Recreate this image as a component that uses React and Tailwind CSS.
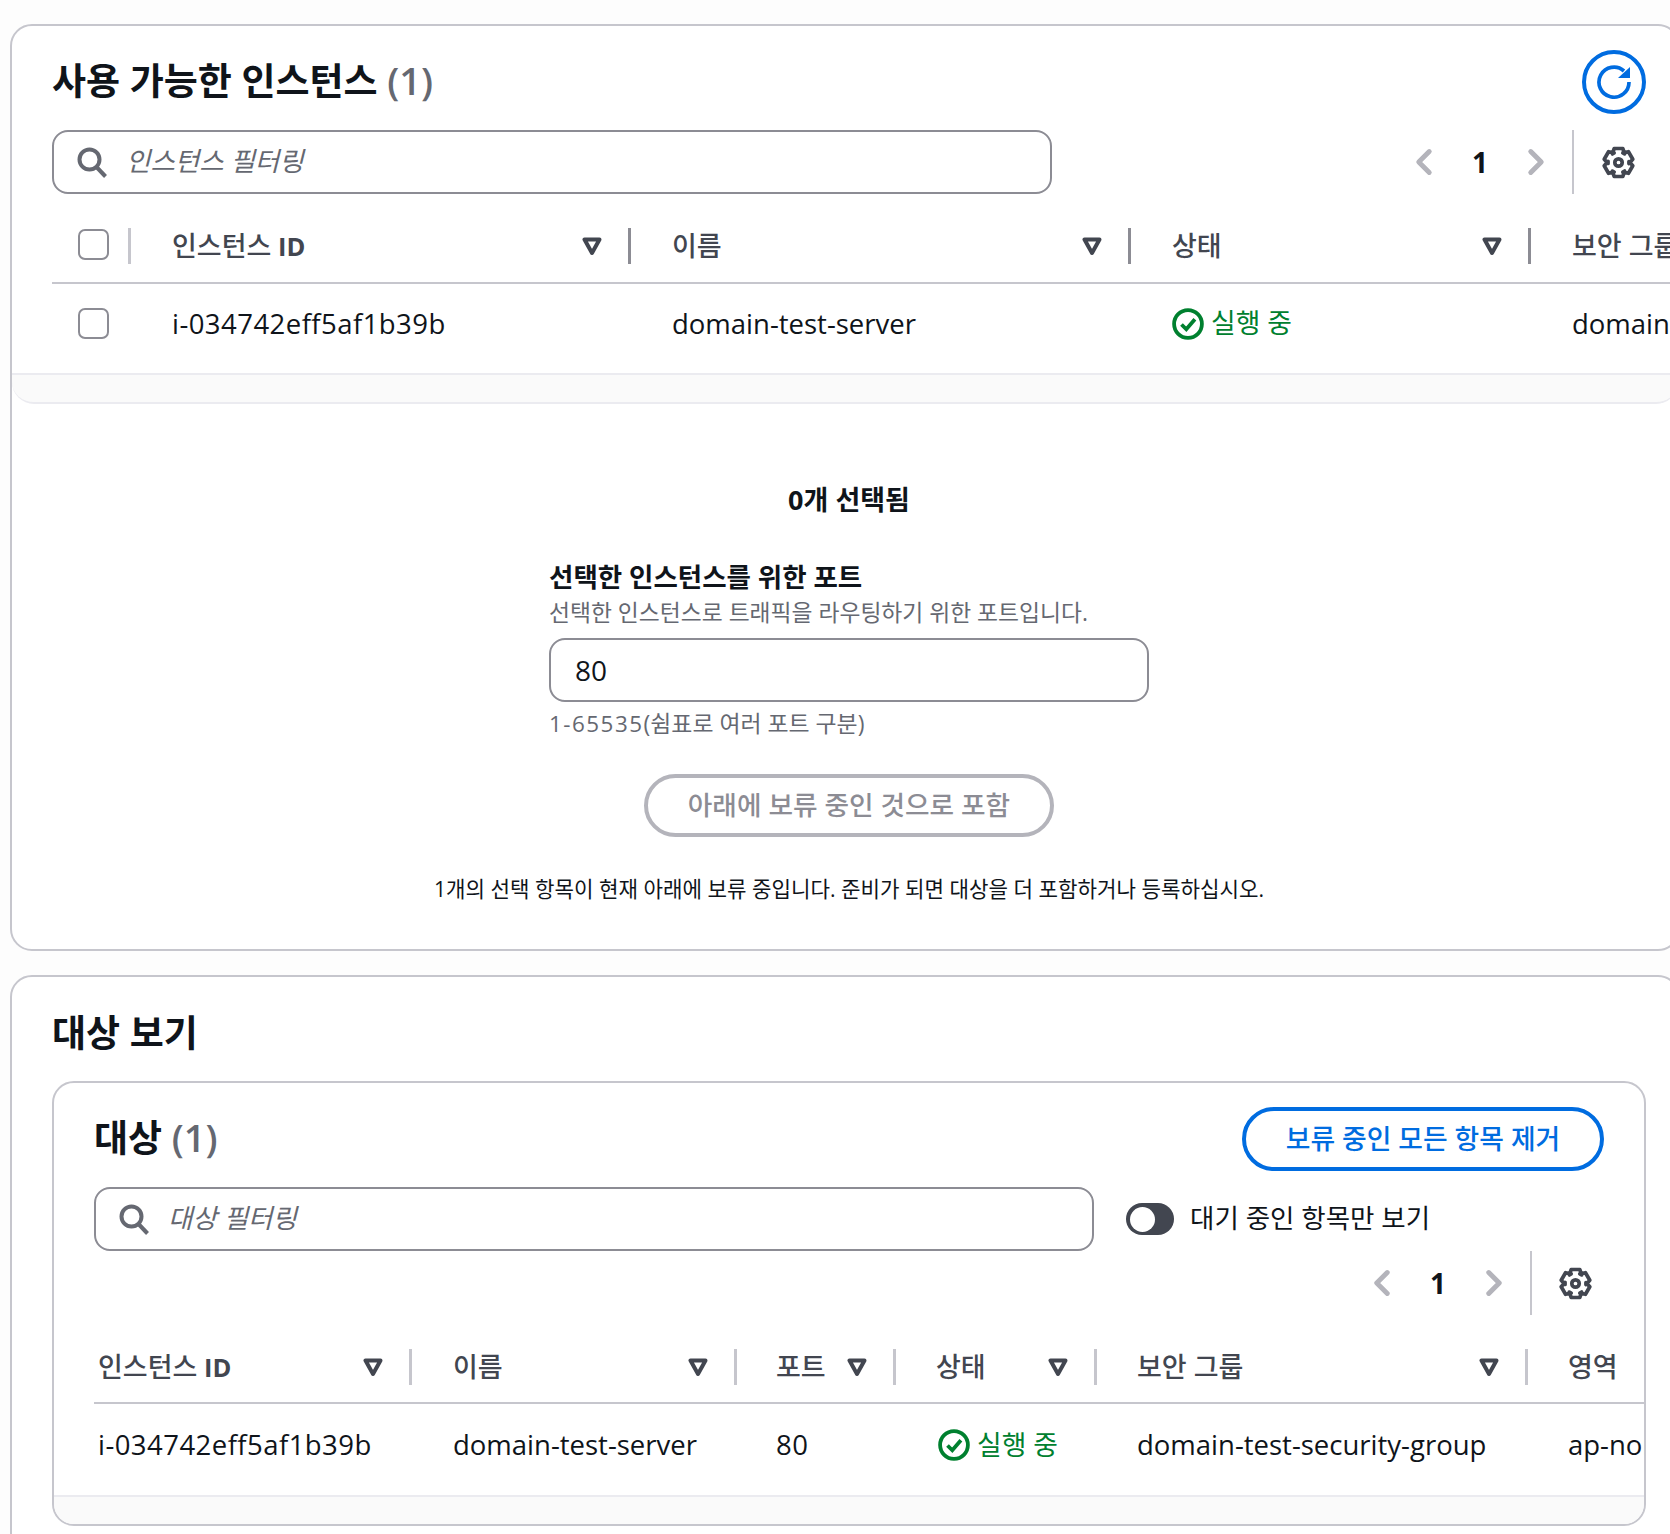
import { ChevronLeft, ChevronRight } from 'lucide-react';

const font = { fontFamily: '"Open Sans", "Noto Sans CJK KR", sans-serif' };

// six-lobed cog outline, top lobe first
const cogPath = (() => {
  const pts = [];
  for (let k = 0; k < 6; k++) {
    const a = ((k * 60 - 90) * Math.PI) / 180;
    [[-0.62, 4.8], [-0.3, 6.7], [0.3, 6.7], [0.62, 4.8]].forEach(([d, r]) => {
      pts.push(`${(8 + r * Math.cos(a + d)).toFixed(2)} ${(8 + r * Math.sin(a + d)).toFixed(2)}`);
    });
  }
  return `M${pts.join('L')}Z`;
})();

function GearIcon() {
  return (
    <svg viewBox="0 0 16 16" className="h-[35px] w-[35px]" fill="none" stroke="#424650" strokeWidth="1.7" strokeLinejoin="round">
      <path d={cogPath} />
      <circle cx="8" cy="8" r="1.7" />
    </svg>
  );
}

function SearchIcon() {
  return (
    <svg viewBox="0 0 32 32" className="h-[32px] w-[32px] shrink-0" fill="none" stroke="#656871" strokeWidth="4">
      <circle cx="13.5" cy="13.5" r="10" />
      <path d="M20.5 21l9 9.5" />
    </svg>
  );
}

function CaretIcon() {
  return (
    <svg viewBox="0 0 20 20" className="h-[20px] w-[20px] shrink-0" fill="none" stroke="#424650" strokeWidth="4" strokeLinejoin="round">
      <path d="M2.5 3.5h15L10 17z" />
    </svg>
  );
}

function StatusOk() {
  return (
    <span className="flex items-center gap-[7px] text-[#00802f]">
      <svg viewBox="0 0 32 32" className="h-[32px] w-[32px] shrink-0" fill="none" stroke="#00802f" strokeWidth="3.8">
        <circle cx="16" cy="16" r="13.9" />
        <path d="M9.5 16.5l4.8 4.8 8.6-10" />
      </svg>
      <span className="text-[26.8px]">실행 중</span>
    </span>
  );
}

function FilterBox({ placeholder, className }) {
  return (
    <div className={`flex h-[64px] items-center rounded-[16px] border-2 border-[#8c8c94] bg-white pl-[22px] ${className}`}>
      <SearchIcon />
      <span className="ml-[18px] text-[26.5px] italic text-[#656871]">{placeholder}</span>
    </div>
  );
}

function Pager({ boxClass }) {
  return (
    <div className="flex items-center">
      <span className={`flex justify-center ${boxClass}`}>
        <ChevronLeft size={42} strokeWidth={2.8} color="#b4b4bb" />
      </span>
      <span className={`flex justify-center text-[28px] font-bold text-[#0f141a] ${boxClass}`}>1</span>
      <span className={`flex justify-center ${boxClass}`}>
        <ChevronRight size={42} strokeWidth={2.8} color="#b4b4bb" />
      </span>
    </div>
  );
}

function HeadCell({ label, latin, width, pad = 'pl-[41px]', divider = 'bg-[#8c8c94]', last }) {
  return (
    <div className={`flex h-[36px] shrink-0 items-center ${width} ${pad}`}>
      <span className="whitespace-nowrap text-[27px] font-medium text-[#424650]">
        {label}
        {latin && <span className="text-[25.5px] font-bold"> {latin}</span>}
      </span>
      {!last && (
        <>
          <span className="ml-auto mr-[26px]">
            <CaretIcon />
          </span>
          <span className={`h-[36px] w-[3px] shrink-0 ${divider}`} />
        </>
      )}
    </div>
  );
}

function BodyCell({ width, pad = 'pl-[41px]', mono, children }) {
  return (
    <div className={`shrink-0 whitespace-nowrap ${width} ${pad} ${mono ? 'tracking-[0.45px]' : ''}`}>{children}</div>
  );
}

function AvailableInstances() {
  return (
    <section className="ml-[10px] mt-[24px] w-[1670px] overflow-hidden rounded-[22px] border-2 border-[#c6c6cd] bg-white">
      <div className="flex h-[104px] items-center justify-between pl-[40px] pr-[32px] pt-[7px]">
        <h2 className="relative -top-[1px] text-[37px] font-bold text-[#0f141a]">
          사용 가능한 인스턴스 <span className="text-[38px] font-semibold text-[#656871]">(1)</span>
        </h2>
        <button className="flex h-[64px] w-[64px] items-center justify-center rounded-full border-[4px] border-[#006ce0]">
          <svg viewBox="0 0 36 36" className="h-[36px] w-[36px]" fill="none" stroke="#006ce0" strokeWidth="3.7">
            <path d="M33 18a15 15 0 1 1-5-11" />
            <path d="M22 14h12v-11z" fill="#006ce0" stroke="none" />
          </svg>
        </button>
      </div>

      <div className="flex h-[64px] items-center pl-[40px] pr-[16px]">
        <FilterBox placeholder="인스턴스 필터링" className="w-[1000px]" />
        <div className="ml-auto flex h-[64px] items-center">
          <Pager boxClass="w-[56px]" />
          <span className="ml-[8px] h-[64px] w-[2px] bg-[#c6c6cd]" />
          <span className="flex w-[88px] justify-center">
            <GearIcon />
          </span>
        </div>
      </div>

      <div className="ml-[40px] mt-[34px] flex border-b-2 border-[#c6c6cd] pb-[18px]">
        <div className="flex h-[36px] w-[79px] shrink-0 items-start">
          <span className="ml-[26px] mt-px h-[31px] w-[31px] rounded-[7px] border-2 border-[#8c8c94] bg-white" />
          <span className="ml-auto h-[36px] w-[3px] bg-[#c6c6cd]" />
        </div>
        <HeadCell label="인스턴스" latin="ID" width="w-[500px]" />
        <HeadCell label="이름" width="w-[500px]" />
        <HeadCell label="상태" width="w-[400px]" />
        <HeadCell label="보안 그룹" width="w-[300px]" last />
      </div>
      <div className="ml-[40px] flex h-[89px] items-center pb-[10px] text-[27.5px] text-[#0f141a]">
        <div className="w-[79px] shrink-0">
          <span className="ml-[26px] block h-[31px] w-[31px] rounded-[7px] border-2 border-[#8c8c94] bg-white" />
        </div>
        <BodyCell width="w-[500px]" mono>i-034742eff5af1b39b</BodyCell>
        <BodyCell width="w-[500px]">domain-test-server</BodyCell>
        <BodyCell width="w-[400px]"><StatusOk /></BodyCell>
        <BodyCell width="w-[300px]">domain-test-security-group</BodyCell>
      </div>
      <div className="h-[31px] rounded-b-[22px] border-y-2 border-[#ebebf0] bg-[#fafafa]" />

      <div className="ml-[337px] flex w-[1000px] flex-col items-center pb-[44px] text-[#0f141a]">
        <p className="mt-[78px] h-[36px] text-[27px] font-bold leading-[36px]">0개 선택됨</p>
        <div className="mt-[41px] w-[600px]">
          <p className="h-[36px] text-[26.5px] font-bold leading-[36px]">선택한 인스턴스를 위한 포트</p>
          <p className="mt-[2px] h-[32px] whitespace-nowrap text-[22.8px] leading-[32px] text-[#656871]">선택한 인스턴스로 트래픽을 라우팅하기 위한 포트입니다.</p>
          <div className="mt-[9px] flex h-[64px] items-center rounded-[16px] border-2 border-[#8c8c94] pl-[24px] text-[28px]">80</div>
          <p className="mt-[6px] h-[32px] text-[22.9px] leading-[32px] text-[#656871]">
            <span className="text-[22.4px] tracking-[1.5px]">1-65535</span>(쉼표로 여러 포트 구분)
          </p>
        </div>
        <button className="mt-[34px] flex h-[63px] w-[410px] items-center justify-center rounded-full border-[4px] border-[#b4b4bb] text-[26.7px] font-medium text-[#8c8c94]">
          아래에 보류 중인 것으로 포함
        </button>
        <p className="mt-[36px] h-[32px] whitespace-nowrap text-[21.2px] leading-[32px]">1개의 선택 항목이 현재 아래에 보류 중입니다. 준비가 되면 대상을 더 포함하거나 등록하십시오.</p>
      </div>
    </section>
  );
}

function TargetView() {
  return (
    <section className="ml-[10px] mt-[24px] h-[700px] w-[1670px] rounded-[22px] border-2 border-[#c6c6cd] bg-white">
      <h2 className="ml-[40px] mt-[34px] h-[44px] text-[37px] font-bold leading-[44px] text-[#0f141a]">대상 보기</h2>
      <div className="ml-[40px] mt-[26px] w-[1594px] overflow-hidden rounded-[22px] border-2 border-[#c6c6cd] bg-white">
        <div className="mt-[24px] flex h-[64px] items-center justify-between pl-[40px] pr-[40px]">
          <h3 className="relative -top-[2px] text-[37px] font-bold text-[#0f141a]">
            대상 <span className="text-[38px] font-semibold text-[#656871]">(1)</span>
          </h3>
          <button className="flex h-[64px] w-[362px] items-center justify-center rounded-full border-[4px] border-[#006ce0] text-[26.8px] font-medium text-[#006ce0]">
            보류 중인 모든 항목 제거
          </button>
        </div>

        <div className="ml-[40px] mt-[16px] flex h-[64px] items-center">
          <FilterBox placeholder="대상 필터링" className="w-[1000px]" />
          <span className="ml-[32px] flex h-[32px] w-[48px] items-center rounded-full bg-[#424650] pl-[4px]">
            <span className="h-[25px] w-[25px] rounded-full bg-white" />
          </span>
          <span className="ml-[16px] text-[26.5px] text-[#0f141a]">대기 중인 항목만 보기</span>
        </div>

        <div className="flex h-[64px] items-center justify-end pr-[26px]">
          <Pager boxClass="w-[56px]" />
          <span className="ml-[8px] h-[64px] w-[2px] bg-[#c6c6cd]" />
          <span className="flex w-[86px] justify-center">
            <GearIcon />
          </span>
        </div>

        <div className="ml-[40px] mt-[34px] flex border-b-2 border-[#c6c6cd] pb-[17px]">
          <HeadCell label="인스턴스" latin="ID" width="w-[318px]" pad="pl-[4px]" divider="bg-[#c6c6cd]" />
          <HeadCell label="이름" width="w-[325px]" divider="bg-[#c6c6cd]" />
          <HeadCell label="포트" width="w-[159px]" pad="pl-[39px]" divider="bg-[#c6c6cd]" />
          <HeadCell label="상태" width="w-[201px]" pad="pl-[40px]" divider="bg-[#c6c6cd]" />
          <HeadCell label="보안 그룹" width="w-[431px]" pad="pl-[40px]" divider="bg-[#c6c6cd]" />
          <HeadCell label="영역" width="w-[200px]" pad="pl-[40px]" last />
        </div>
        <div className="ml-[40px] flex h-[91px] items-center pb-[9px] text-[27.5px] text-[#0f141a]">
          <BodyCell width="w-[318px]" pad="pl-[4px]" mono>i-034742eff5af1b39b</BodyCell>
          <BodyCell width="w-[325px]">domain-test-server</BodyCell>
          <BodyCell width="w-[159px]" pad="pl-[39px]" mono>80</BodyCell>
          <BodyCell width="w-[201px]" pad="pl-[42px]"><StatusOk /></BodyCell>
          <BodyCell width="w-[431px]" pad="pl-[40px]">domain-test-security-group</BodyCell>
          <BodyCell width="w-[200px]" pad="pl-[40px]">ap-northeast-2</BodyCell>
        </div>
        <div className="h-[29px] rounded-b-[20px] border-t-2 border-[#ebebf0] bg-[#fafafa]" />
      </div>
    </section>
  );
}

export default function App() {
  return (
    <div className="h-[1534px] w-[1670px] overflow-hidden bg-[#fdfdfd] pt-px" style={font}>
      <div className="-mt-px">
        <AvailableInstances />
        <TargetView />
      </div>
    </div>
  );
}
